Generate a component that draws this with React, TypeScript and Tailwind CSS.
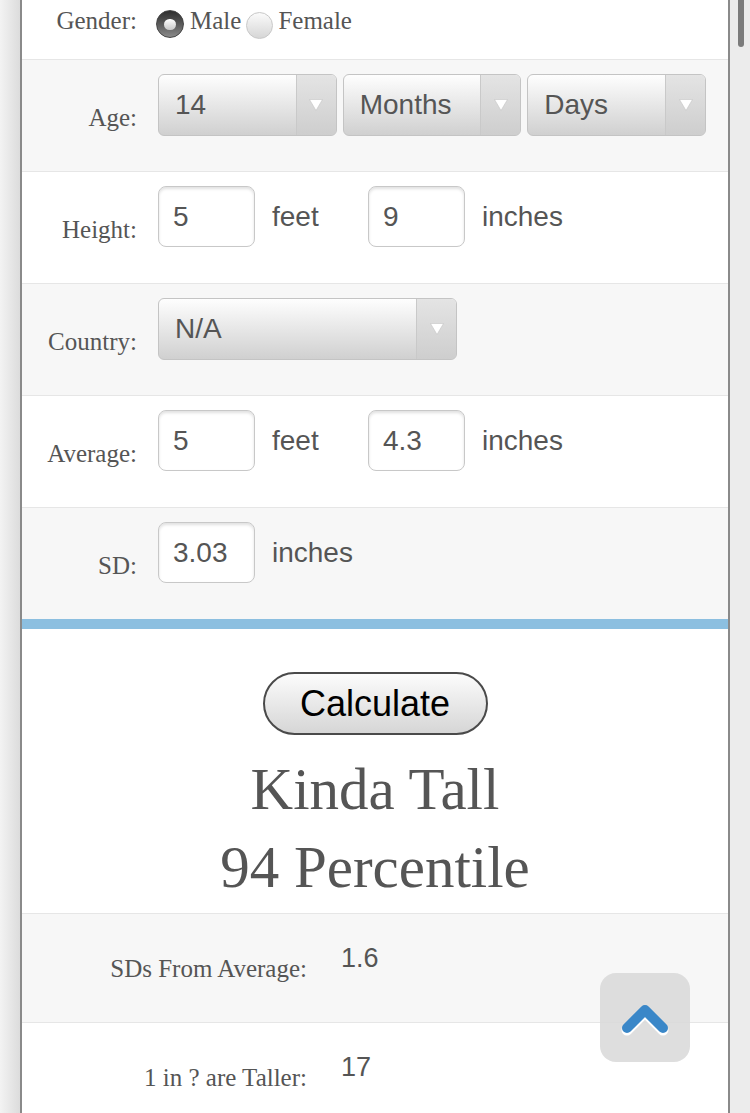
import type { ReactNode } from "react";

const serif = "font-['Liberation_Serif',serif]";
const sans = "font-['Liberation_Sans',Arial,sans-serif]";

function Row({ alt, label, children, border = true }: { alt?: boolean; label: string; children: ReactNode; border?: boolean }) {
  return (
    <div
      className={`flex ${border ? "h-[112px] border-b border-[#e6e6e6]" : "h-[111px]"} ${alt ? "bg-[#f7f7f7]" : "bg-white"}`}
    >
      <div className={`w-[115px] shrink-0 pt-[43px] text-right text-[25px] leading-[30px] text-[#555] ${serif}`}>{label}</div>
      <div className="ml-[21px] flex flex-1 items-start pt-[14px] pr-[22px]">{children}</div>
    </div>
  );
}

function Select({ value, className }: { value: string; className: string }) {
  return (
    <div
      className={`flex h-[62px] overflow-hidden rounded-[6px] border border-[#c4c4c4] bg-linear-to-b from-[#fefefe] to-[#d0d0d0] ${className}`}
    >
      <div className={`flex flex-1 items-center pl-[16px] text-[28px] text-[#555] ${sans}`}>{value}</div>
      <div className="flex w-[40px] items-center justify-center border-l border-[#c9c9c9] bg-linear-to-b from-[#e4e4e4] to-[#cecece]">
        <svg width="14" height="12" viewBox="0 0 14 12">
          <polygon points="0.5,0.5 13.5,0.5 7,11.5" fill="#fff" stroke="#c4c4c4" strokeWidth="0.6" />
        </svg>
      </div>
    </div>
  );
}

function Field({ value }: { value: string }) {
  return (
    <div
      className={`flex h-[61px] w-[97px] shrink-0 items-center rounded-[8px] border border-[#c8c8c8] bg-white pl-[14px] text-[28px] text-[#555] shadow-[inset_0_2px_3px_rgba(0,0,0,0.12)] ${sans}`}
    >
      {value}
    </div>
  );
}

function Unit({ text, wide }: { text: string; wide?: boolean }) {
  return (
    <div className={`ml-[17px] flex h-[61px] items-center text-[28px] text-[#555] ${sans} ${wide ? "w-[96px]" : ""}`}>
      {text}
    </div>
  );
}

function Result({ alt, label, value }: { alt?: boolean; label: string; value: string }) {
  return (
    <div className={`flex h-[109px] border-b border-[#e6e6e6] ${alt ? "bg-[#f7f7f7]" : "bg-white"}`}>
      <div className={`w-[285px] shrink-0 pt-[40px] text-right text-[25px] leading-[30px] text-[#555] ${serif}`}>{label}</div>
      <div className={`ml-[34px] pt-[29px] text-[27px] leading-[30px] text-[#555] ${sans}`}>{value}</div>
    </div>
  );
}

export default function App() {
  return (
    <div className="relative flex h-[1113px] overflow-hidden bg-[#ececec]">
      <div className="w-[20px] shrink-0 bg-linear-to-r from-[#f3f3f3] to-[#dcdcdc]" />
      <div className="w-[710px] shrink-0 border-x-2 border-[#8a8a8a] bg-white">
        <div className="flex h-[60px] border-b border-[#e6e6e6] bg-white">
          <div className={`w-[115px] shrink-0 pt-[6px] text-right text-[25px] leading-[30px] text-[#555] ${serif}`}>Gender:</div>
          <div className={`ml-[19px] flex items-start text-[25px] leading-[30px] text-[#555] ${serif}`}>
            <div className="mt-[10px] flex h-[28px] w-[28px] items-center justify-center rounded-full border border-[#444] bg-linear-to-b from-[#2e2e2e] to-[#8a8a8a]">
              <div className="h-[11px] w-[12px] rounded-full bg-linear-to-b from-white to-[#c8c8c8]" />
            </div>
            <span className="ml-[6px] pt-[6px]">Male</span>
            <div className="ml-[5px] mt-[12px] h-[27px] w-[27px] rounded-full border border-[#c8c8c8] bg-linear-to-b from-[#fbfbfb] to-[#d6d6d6]" />
            <span className="ml-[5px] pt-[6px]">Female</span>
          </div>
        </div>

        <Row alt label="Age:">
          <div className="grid w-full grid-cols-3 gap-[6px]">
            <Select value="14" className="w-full" />
            <Select value="Months" className="w-full" />
            <Select value="Days" className="w-full" />
          </div>
        </Row>

        <Row label="Height:">
          <Field value="5" />
          <Unit text="feet" wide />
          <Field value="9" />
          <Unit text="inches" />
        </Row>

        <Row alt label="Country:">
          <Select value="N/A" className="w-[299px]" />
        </Row>

        <Row label="Average:">
          <Field value="5" />
          <Unit text="feet" wide />
          <Field value="4.3" />
          <Unit text="inches" />
        </Row>

        <Row alt label="SD:" border={false}>
          <Field value="3.03" />
          <Unit text="inches" />
        </Row>

        <div className="h-[10px] bg-[#8cbfe0]" />

        <div className="flex h-[285px] flex-col items-center border-b border-[#e6e6e6] bg-white pt-[43px]">
          <button
            type="button"
            className={`h-[63px] w-[225px] rounded-full border-2 border-[#4a4a4a] bg-linear-to-b from-[#fcfcfc] to-[#d6d6d6] text-[36px] text-black ${sans}`}
          >
            Calculate
          </button>
          <div className={`mt-[15px] text-center text-[59px] leading-[78px] text-[#555] ${serif}`}>
            <div>Kinda Tall</div>
            <div>94 Percentile</div>
          </div>
        </div>

        <Result alt label="SDs From Average:" value="1.6" />
        <Result label="1 in ? are Taller:" value="17" />
      </div>
      <div className="w-[20px] shrink-0 bg-[#ececec]" />

      <div className="absolute right-[6px] top-[-20px] h-[67px] w-[6px] rounded-full bg-[#7c7c7c]" />

      <div className="absolute bottom-[51px] right-[60px] h-[89px] w-[90px] rounded-[16px] bg-[#d8d8d8]/85">
        <svg width="90" height="89" viewBox="0 0 90 89">
          <polyline points="27,57 45,39 63,57" fill="none" stroke="#fff" strokeWidth="11" strokeLinecap="round" strokeLinejoin="round" />
          <polyline points="27,55 45,37 63,55" fill="none" stroke="#3a87c8" strokeWidth="10" strokeLinecap="round" strokeLinejoin="round" />
        </svg>
      </div>
    </div>
  );
}
